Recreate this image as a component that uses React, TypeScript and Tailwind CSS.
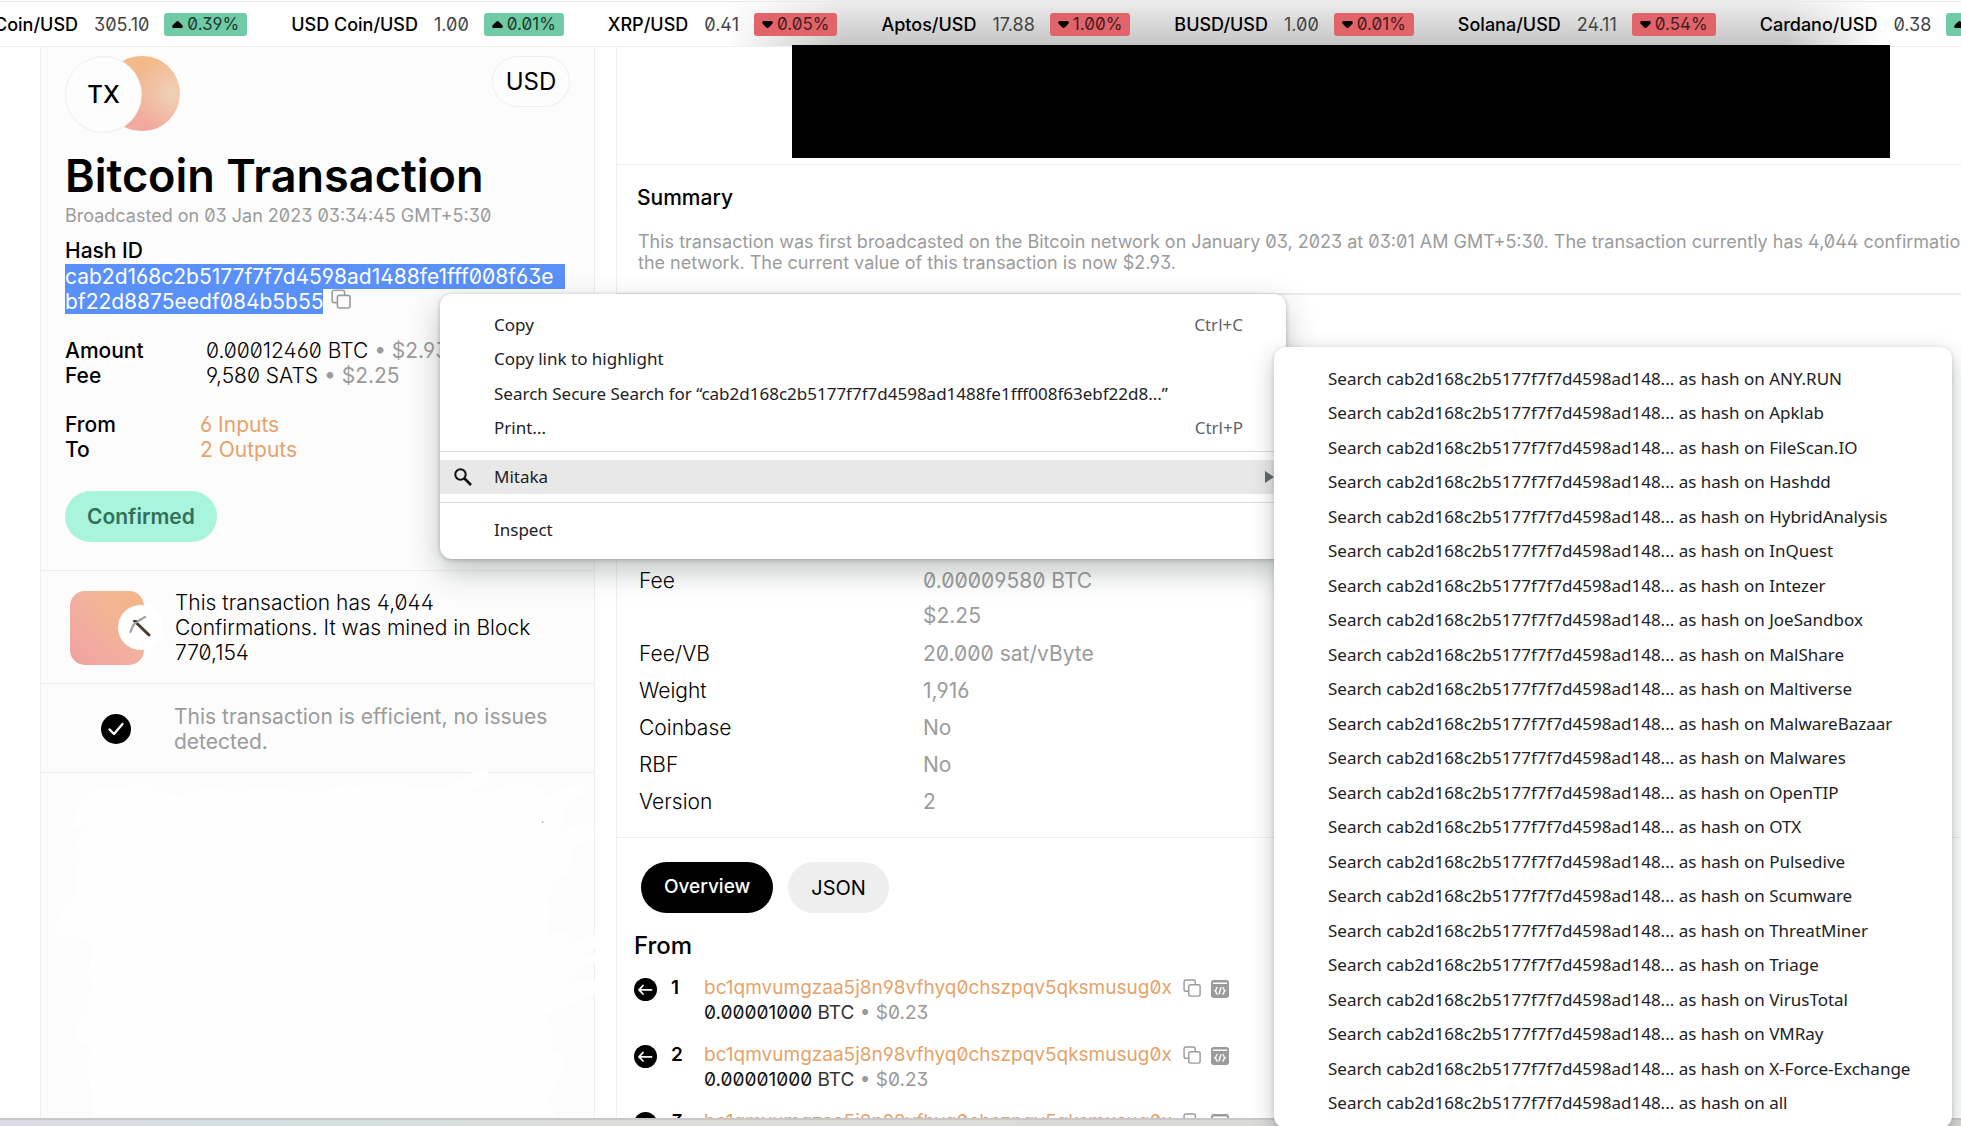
import React from "react";

type Ticker = { pair: string; price: string; change: string; up: boolean };

const tickers: Ticker[] = [
  { pair: "Coin/USD", price: "305.10", change: "0.39%", up: true },
  { pair: "USD Coin/USD", price: "1.00", change: "0.01%", up: true },
  { pair: "XRP/USD", price: "0.41", change: "0.05%", up: false },
  { pair: "Aptos/USD", price: "17.88", change: "1.00%", up: false },
  { pair: "BUSD/USD", price: "1.00", change: "0.01%", up: false },
  { pair: "Solana/USD", price: "24.11", change: "0.54%", up: false },
  { pair: "Cardano/USD", price: "0.38", change: "0.15%", up: true },
];

const engines = [
  "ANY.RUN", "Apklab", "FileScan.IO", "Hashdd", "HybridAnalysis", "InQuest",
  "Intezer", "JoeSandbox", "MalShare", "Maltiverse", "MalwareBazaar",
  "Malwares", "OpenTIP", "OTX", "Pulsedive", "Scumware", "ThreatMiner",
  "Triage", "VirusTotal", "VMRay", "X-Force-Exchange", "all",
];

const details = [
  ["Fee/VB", "20.000 sat/vByte"],
  ["Weight", "1,916"],
  ["Coinbase", "No"],
  ["RBF", "No"],
  ["Version", "2"],
];

function CopyIcon({ className }: { className: string }) {
  return (
    <svg viewBox="0 0 20 20" fill="none" stroke="#9b9b9b" strokeWidth="1.6" className={className} aria-hidden="true">
      <path d="M6.2 13.6H3.2a2 2 0 0 1-2-2V3.2a2 2 0 0 1 2-2h8.400a2 2 0 0 1 2 2v3" />
      <rect x="6.400" y="6.400" width="12.600" height="12.600" rx="2" />
    </svg>
  );
}

function CodeIcon() {
  return (
    <svg viewBox="0 0 18 18" className="h-[18px] w-[18px]" aria-hidden="true">
      <rect width="18" height="18" rx="3" fill="#9b9b9b" />
      <path d="M2.500 3.300h13" stroke="#fff" strokeWidth="1.500" strokeLinecap="round" />
      <path
        d="M6.200 7.600c-1.600 0-.4 2.600-2 3.200 1.600.6.4 3.200 2 3.200M11.800 7.600c1.600 0 .4 2.600 2 3.200-1.600.6-.4 3.200-2 3.200M9.900 7.800l-1.800 6"
        fill="none"
        stroke="#fff"
        strokeWidth="1.400"
        strokeLinecap="round"
      />
    </svg>
  );
}

function TickerItem({ t }: { t: Ticker }) {
  return (
    <li className="flex shrink-0 items-center text-[18px] leading-[23px]">
      <span className="font-medium text-black">{t.pair}</span>
      <span className="ml-4 text-[#444]">{t.price}</span>
      <span
        className={
          t.up
            ? "ml-[15px] flex h-[23px] items-center gap-1 rounded-[3px] bg-[#70caa6] px-2 text-[17px] text-[#1d3b30]"
            : "ml-[15px] flex h-[23px] items-center gap-1 rounded-[3px] bg-[#e1646b] px-2 text-[17px] text-[#4a1a1d]"
        }
      >
        <svg viewBox="0 0 11 7" className="h-[7px] w-[11px]" aria-hidden="true">
          {t.up ? (
            <path d="M5.500 0 Q6.500 0 10.500 4.500 Q11.300 6.600 9.500 7H1.500Q-.3 6.600.5 4.500Q4.500 0 5.500 0Z" fill="#000" />
          ) : (
            <path d="M5.500 7 Q6.500 7 10.500 2.500 Q11.300.4 9.500 0H1.500Q-.3.4.5 2.500Q4.500 7 5.500 7Z" fill="#000" />
          )}
        </svg>
        {t.change}
      </span>
    </li>
  );
}

function InputRow({ n }: { n: number }) {
  return (
    <li className="flex h-[52px]">
      <svg viewBox="0 0 23 23" className="mt-1 h-[23px] w-[23px] shrink-0" aria-hidden="true">
        <circle cx="11.500" cy="11.500" r="11.500" fill="#000" />
        <path d="M17.500 11.800H5.500M9 7.500l-4 4.300L9 16" fill="none" stroke="#fff" strokeWidth="1.800" strokeLinecap="round" strokeLinejoin="round" />
      </svg>
      <span className="ml-[14px] w-[33px] text-[19px] font-semibold leading-[27px]">{n}</span>
      <div>
        <div className="flex items-center pt-[2px]">
          <a href="#address" className="h-[23px] overflow-hidden text-[19px] leading-[23px] text-[#e5a36a]">
            bc1qmvumgzaa5j8n98vfhyq0chszpqv5qksmusug0x
          </a>
          <button type="button" aria-label="Copy address" className="ml-[11px]">
            <CopyIcon className="h-[18px] w-[18px]" />
          </button>
          <button type="button" aria-label="Show script" className="ml-[10px] mt-[2px]">
            <CodeIcon />
          </button>
        </div>
        <p className="mt-[2px] text-[19px] leading-[24px] text-[#333]">
          <span className="text-[#111]">0.00001000</span> BTC <span className="text-[#999]">• $0.23</span>
        </p>
      </div>
    </li>
  );
}

function MenuItem({ label, shortcut }: { label: string; shortcut?: string }) {
  return (
    <button type="button" role="menuitem" className="flex min-h-0 w-full flex-1 items-center justify-between whitespace-nowrap pl-[54px] text-left">
      <span>{label}</span>
      {shortcut && <span className="pr-[43px] text-[#5f6368]">{shortcut}</span>}
    </button>
  );
}

export default function App() {
  return (
    <div className="relative flex h-screen flex-col overflow-hidden bg-white font-['Inter',sans-serif] text-black [font-feature-settings:'zero','ss01']">
      <header className="h-[47px] shrink-0 overflow-hidden border-b border-[#eee] bg-[linear-gradient(to_right,#fff_37%,#ffffff00_43%,#ffffff00_91%,#fff_96%),linear-gradient(to_bottom,#eee,#c4c4c4)]">
        <ul className="-ml-[6px] mt-px flex h-[46px] items-center gap-11 border-t border-[#e9e9e9]">
          {tickers.map((t) => (
            <TickerItem key={t.pair} t={t} />
          ))}
        </ul>
      </header>

      <div className="flex min-h-0 flex-1 gap-[21px] pl-10">
        <aside className="flex w-[555px] shrink-0 flex-col border-x border-[#eee] bg-[#fcfcfc]">
          <section className="border-b border-[#eee] px-6 pb-7 pt-[9px]">
            <div className="flex items-start justify-between">
              <div className="flex items-start">
                <div className="z-10 grid h-[77px] w-[77px] place-items-center rounded-full border border-[#eee] bg-[#fdfdfd] text-[24px] font-medium">
                  TX
                </div>
                <div className="-ml-[38px] h-[75px] w-[76px] rounded-full bg-[radial-gradient(circle_at_90%_50%,#efd2b6,transparent_50%),linear-gradient(to_bottom,#f3bb88,#f2a7a0)]" />
              </div>
              <button type="button" className="h-[51px] w-[78px] rounded-full border border-[#eee] bg-[#fdfdfd] text-[24px]">
                USD
              </button>
            </div>
            <h1 className="mt-4 whitespace-nowrap text-[45px] font-semibold leading-[54px]">Bitcoin Transaction</h1>
            <p className="mt-px text-[18px] leading-6 text-[#9b9b9b]">Broadcasted on 03 Jan 2023 03:34:45 GMT+5:30</p>
            <h2 className="mt-[10px] text-[21px] font-medium leading-[26px]">Hash ID</h2>
            <p className="text-[21px] leading-[25px] text-white">
              <span className="block w-[500px] whitespace-nowrap bg-[#5990f9]">cab2d168c2b5177f7f7d4598ad1488fe1fff008f63e</span>
              <span className="flex items-start">
                <span className="bg-[#5990f9]">bf22d8875eedf084b5b55</span>
                <button type="button" aria-label="Copy hash" className="ml-2">
                  <CopyIcon className="h-5 w-5" />
                </button>
              </span>
            </p>
            <dl className="mt-6 grid grid-cols-[141px_1fr] whitespace-nowrap text-[21px] leading-[25px]">
              <dt className="font-medium">Amount</dt>
              <dd className="font-light">
                0.00012460 BTC <span className="font-normal text-[#9b9b9b]">• $2.93</span>
              </dd>
              <dt className="font-medium">Fee</dt>
              <dd className="font-light">
                9,580 SATS <span className="font-normal text-[#9b9b9b]">• $2.25</span>
              </dd>
            </dl>
            <dl className="mt-6 grid grid-cols-[135px_1fr] text-[21px] leading-[25px]">
              <dt className="font-medium">From</dt>
              <dd>
                <a href="#inputs" className="text-[#e5a36a]">6 Inputs</a>
              </dd>
              <dt className="font-medium">To</dt>
              <dd>
                <a href="#outputs" className="text-[#e5a36a]">2 Outputs</a>
              </dd>
            </dl>
            <span className="mt-[29px] inline-flex h-[51px] items-center rounded-full bg-[#a9f4dc] px-[22px] align-top text-[21px] font-semibold text-[#33705b]">
              Confirmed
            </span>
          </section>

          <section className="flex border-b border-[#eee] pb-[18px] pl-[29px] pt-[19px]">
            <div className="flex h-[75px] w-[105px] shrink-0 items-center">
              <div className="h-[74px] w-[74px] rounded-[15px] bg-[radial-gradient(circle_at_85%_10%,#f3b488,transparent_65%),linear-gradient(to_top_right,#f3a09f,#f1c0a2)]" />
              <div className="-ml-[26px] mt-[-1px] grid h-[45px] w-[45px] place-items-center rounded-full bg-white">
                <svg viewBox="0 0 24 24" className="h-6 w-6" fill="none" strokeLinecap="round" aria-hidden="true">
                  <path d="M6 6.500 20 20" stroke="#4a3c2c" strokeWidth="3" />
                  <path d="M1.500 17Q4 9 7.500 7T16 2" stroke="#a3a3a3" strokeWidth="2.200" />
                  <path d="M5 6h2" stroke="#4a3c2c" strokeWidth="2" />
                </svg>
              </div>
            </div>
            <p className="text-[21px] font-light leading-[25px]">
              This transaction has 4,044
              <br />
              Confirmations. It was mined in Block
              <br />
              770,154
            </p>
          </section>

          <section className="flex items-center border-b border-[#eee] pb-[18px] pl-[60px] pt-5">
            <svg viewBox="0 0 30 30" className="mr-[43px] h-[30px] w-[30px] shrink-0" aria-hidden="true">
              <circle cx="15" cy="15" r="15" fill="#000" />
              <path d="M8.500 15.500l4.500 4.500L21.500 10" fill="none" stroke="#fff" strokeWidth="2.300" strokeLinecap="round" strokeLinejoin="round" />
            </svg>
            <p className="text-[21px] leading-[25px] text-[#9b9b9b]">
              This transaction is efficient, no issues
              <br />
              detected.
            </p>
          </section>

          <div className="relative flex-1">
            <svg viewBox="97 60 1373 1044" preserveAspectRatio="none" className="absolute -top-1 left-0 h-[348px] w-[578px]" fill="#fefefe" aria-hidden="true">
              <path d="M177 234V185Q190 150 228 122L282 120Q310 102 362 107V130L400 132 428 141Q500 105 545 131L577 135 600 120 682 114V134Q720 115 766 136L800 112 844 107V115Q880 96 916 106L957 96V116Q1000 106 1030 123L1055 121Q1090 95 1130 65L1159 64V92L1115 130H1165Q1195 105 1240 102 1295 105 1295 145L1365 107 1390 108V136L1342 170Q1342 215 1328 248 1370 220 1411 229V260L1345 312 1361 316V345L1349 348V378L1311 406V438L1303 441V470L1309 480V505L1299 508 1303 565 1330 549H1354V582L1414 556V600L1352 628 1414 614V642L1370 657V680L1336 700 1414 693V732L1296 795 1300 828H1314V855L1311 907Q1337 915 1337 950L1319 1010 1296 1068 1319 1078V1104H219V1055L214 1020 209 940 216 885H190Q177 885 177 855 177 820 209 790L204 745 216 722V693L209 690 216 620 219 573H193V560H132V525Q145 485 189 422 177 410 177 375 180 335 202 309H182Q180 270 207 234Z" />
              <rect x="1288" y="216" width="2" height="6" fill="#999" />
            </svg>
          </div>
        </aside>

        <main className="min-w-0 flex-1 border-l border-[#eee]">
          <div className="border-b border-[#eee] pb-[6px] pl-[175px] pr-[71px]">
            <div className="relative -mt-[2px] h-[113px] bg-black" />
          </div>
          <section className="whitespace-nowrap border-b-2 border-[#ececec] px-5 pb-5 pt-5">
            <h2 className="text-[21px] font-medium leading-[26px]">Summary</h2>
            <p className="ml-px mt-5 text-[18px] leading-[21px] text-[#9b9b9b]">
              This transaction was first broadcasted on the Bitcoin network on January 03, 2023 at 03:01 AM GMT+5:30. The transaction currently has 4,044 confirmations on
              <br />
              the network. The current value of this transaction is now $2.93.
            </p>
          </section>
          <section className="border-b border-[#eee] pb-[17px] pl-[22px] pt-[268px]">
            <dl className="grid grid-cols-[284px_1fr] text-[21px] leading-[37px]">
              <dt className="font-light leading-[35px]">Fee</dt>
              <dd className="pb-[2px] leading-[35px] text-[#9b9b9b]">
                0.00009580 BTC
                <br />
                $2.25
              </dd>
              {details.map(([k, v]) => (
                <React.Fragment key={k}>
                  <dt className="font-light">{k}</dt>
                  <dd className="text-[#9b9b9b]">{v}</dd>
                </React.Fragment>
              ))}
            </dl>
          </section>
          <section className="pl-[17px] pt-6">
            <div className="ml-[7px] flex gap-[15px]">
              <button type="button" className="h-[51px] rounded-full bg-black px-[23px] text-[19px] font-medium text-white">
                Overview
              </button>
              <button type="button" className="h-[51px] rounded-full bg-[#eee] px-[23px] text-[20px]">
                JSON
              </button>
            </div>
            <h2 className="mt-[18px] text-[24px] font-medium leading-[30px]">From</h2>
            <ul className="mt-[13px] flex flex-col gap-[15px]">
              {[1, 2, 3].map((n) => (
                <InputRow key={n} n={n} />
              ))}
            </ul>
          </section>
        </main>
      </div>

      <footer className="relative z-10 h-2 shrink-0 border-t-2 border-[#c8c8cb] bg-[linear-gradient(to_right,#dcd9e3,#d3dfe0_14%,#dcdcda_30%,#d8d8d6)]" />

      <div
        role="menu"
        aria-label="Context menu"
        className="absolute left-[440px] top-[294px] z-20 flex h-[265px] w-[846px] flex-col rounded-xl bg-white pt-[13px] font-['Noto_Sans',sans-serif] text-[17px] text-[#202124] shadow-[0_12px_30px_rgba(60,70,70,0.32),0_1px_4px_rgba(0,0,0,0.25)] [font-feature-settings:normal]"
      >
        <div className="flex h-[138px] flex-col">
          <MenuItem label="Copy" shortcut="Ctrl+C" />
          <MenuItem label="Copy link to highlight" />
          <MenuItem label="Search Secure Search for “cab2d168c2b5177f7f7d4598ad1488fe1fff008f63ebf22d8...”" />
          <MenuItem label="Print..." shortcut="Ctrl+P" />
        </div>
        <hr className="mt-[6px] border-[#dadce0]" />
        <button type="button" role="menuitem" className="mt-2 flex h-[34px] items-center bg-[#e8e8e8] pl-[14px] pr-3 text-left">
          <svg viewBox="0 0 18 18" className="mr-[22px] h-[18px] w-[18px]" fill="none" stroke="#111" aria-hidden="true">
            <circle cx="6.500" cy="6.500" r="5.200" strokeWidth="2" />
            <path d="M10.500 10.500 17 17" strokeWidth="2.600" />
          </svg>
          <span className="flex-1">Mitaka</span>
          <svg viewBox="0 0 9 12" className="h-3 w-[9px]" aria-hidden="true">
            <path d="M0 0 9 6 0 12Z" fill="#5f6368" />
          </svg>
        </button>
        <hr className="mt-2 border-[#dadce0]" />
        <div className="mt-[10px] flex h-[34px]">
          <MenuItem label="Inspect" />
        </div>
      </div>

      <div
        role="menu"
        aria-label="Mitaka"
        className="absolute left-[1274px] top-[347px] z-30 w-[678px] rounded-xl bg-white pb-2 pt-[14px] font-['Noto_Sans',sans-serif] text-[17px] text-[#202124] shadow-[0_8px_22px_rgba(60,70,70,0.32),0_1px_4px_rgba(0,0,0,0.15)] [font-feature-settings:normal]"
      >
        <div className="flex h-[759px] flex-col">
          {engines.map((e) => (
            <MenuItem key={e} label={`Search cab2d168c2b5177f7f7d4598ad148... as hash on ${e}`} />
          ))}
        </div>
      </div>
    </div>
  );
}
